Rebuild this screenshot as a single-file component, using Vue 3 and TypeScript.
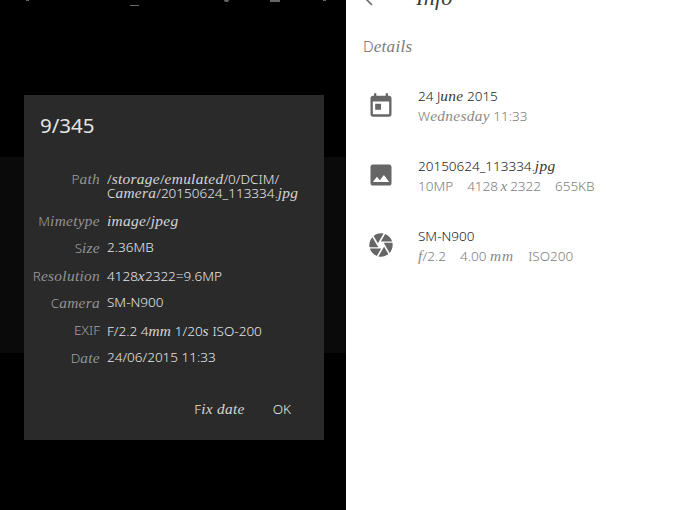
<script setup lang="ts">
interface Part { t: string; c?: boolean }
const p = (s: string): Part[] =>
  s.split(/([a-z]+)/).filter(Boolean).map((t) => ({ t, c: /^[a-z]/.test(t) }))
const rows = [
  { k: 'Path', v: ['/storage/emulated/0/DCIM/', 'Camera/20150624_113334.jpg'] },
  { k: 'Mimetype', v: ['image/jpeg'] },
  { k: 'Size', v: ['2.36MB'] },
  { k: 'Resolution', v: ['4128x2322=9.6MP'] },
  { k: 'Camera', v: ['SM-N900'] },
  { k: 'EXIF', v: ['F/2.2 4mm 1/20s ISO-200'] },
  { k: 'Date', v: ['24/06/2015 11:33'] },
]
</script>

<template>
  <div class="root">
    <section class="left">
      <div class="strip">
        <i class="mark m1"></i>
        <i class="mark m2"></i>
        <i class="mark m3"></i>
        <i class="mark m4"></i>
        <i class="mark m5"></i>
      </div>
      <div class="band"></div>
      <div class="dialog">
        <h2 class="title">9/345</h2>
        <div class="table">
          <div v-for="r in rows" :key="r.k" class="row">
            <div class="key"><span v-for="(x, i) in p(r.k)" :key="i" :class="{ c: x.c }">{{ x.t }}</span></div>
            <div class="val">
              <div v-for="(l, j) in r.v" :key="j" class="line"><span v-for="(x, i) in p(l)" :key="i" :class="{ c: x.c }">{{ x.t }}</span></div>
            </div>
          </div>
        </div>
        <div class="actions">
          <span>F<span class="c">ix date</span></span>
          <span>OK</span>
        </div>
      </div>
    </section>
    <section class="right">
      <div class="bar">
        <svg class="back" width="12" height="8" viewBox="0 0 12 8"><path d="M8 -4 2.500 1.500 8 7" transform="translate(0 -2)" fill="none" stroke="#666" stroke-width="1.6"/></svg>
        <span class="info c">Info</span>
      </div>
      <div class="heading"><span>D</span><span class="c">etails</span></div>
      <div class="item">
        <svg class="icon" viewBox="0 0 24 24"><path fill="#666" d="M19 4h-1V2h-2v2H8V2H6v2H5C3.900 4 3 4.900 3 6v14c0 1.100.9 2 2 2h14c1.100 0 2-.9 2-2V6c0-1.100-.9-2-2-2zm0 16H5V9h14v11zM7 11h5v5H7z"/></svg>
        <div class="text">
          <div class="main">24 J<span class="c">une</span> 2015</div>
          <div class="sub">W<span class="c">ednesday</span> 11:33</div>
        </div>
      </div>
      <div class="item">
        <svg class="icon" viewBox="0 0 24 24"><path fill="#666" d="M21 19V5c0-1.100-.9-2-2-2H5c-1.100 0-2 .9-2 2v14c0 1.100.9 2 2 2h14c1.100 0 2-.9 2-2zM8.500 13.500l2.500 3.010L14.500 12l4.500 6H5l3.500-4.500z"/></svg>
        <div class="text">
          <div class="main">20150624_113334.<span class="c">jpg</span></div>
          <div class="sub spaced"><span>10MP</span><span class="tight">4128 <span class="c">x</span> 2322</span><span>655KB</span></div>
        </div>
      </div>
      <div class="item">
        <svg class="icon" viewBox="0 0 24 24"><path fill="#666" d="M9.400 10.500l4.770-8.260C13.470 2.090 12.750 2 12 2c-2.400 0-4.600.85-6.320 2.260l3.660 6.340.06-.1zM21.540 9c-.92-2.920-3.150-5.260-6-6.340L11.880 9h9.660zm.26 1h-7.490l.29.500 4.760 8.250C21 16.970 22 14.610 22 12c0-.69-.07-1.350-.2-2zM8.540 12l-3.900-6.750C3.010 7.030 2 9.390 2 12c0 .69.07 1.350.2 2h7.490l-1.150-2zm-6.080 3c.92 2.920 3.150 5.260 6 6.340L12.120 15H2.460zm11.270 0l-3.900 6.760c.7.150 1.420.24 2.170.24 2.400 0 4.600-.85 6.320-2.260l-3.660-6.340-.93 1.600z"/></svg>
        <div class="text">
          <div class="main">SM-N900</div>
          <div class="sub spaced"><span><span class="c">f</span>/2.2</span><span>4.00 <span class="c wide">mm</span></span><span>ISO200</span></div>
        </div>
      </div>
    </section>
  </div>
</template>

<style scoped>
.root { width: 693px; height: 510px; display: flex; overflow: hidden; font-family: "Noto Sans", sans-serif; font-weight: 300; }
.c { font-family: "Liberation Serif", serif; font-style: italic; font-size: 1.14em; letter-spacing: 0.3px; line-height: 1; opacity: 0.9; }
.wide { letter-spacing: 1px; }
.tight { word-spacing: -1px; }
.left { position: relative; width: 346px; height: 510px; background: #000; flex: none; padding: 95px 0 0 24px; box-sizing: border-box; }
.strip { position: absolute; inset: 0 0 auto 0; height: 6px; }
.mark { position: absolute; top: 0; height: 2px; background: #666; }
.m1 { left: 26px; width: 3px; height: 1px; }
.m2 { left: 130px; width: 9px; top: 5px; height: 1px; }
.m3 { left: 224px; width: 5px; height: 2px; border-radius: 0 0 3px 3px; }
.m4 { left: 270px; width: 10px; height: 2px; }
.m5 { left: 323px; width: 3px; height: 1px; }
.band { position: absolute; left: 0; right: 0; top: 157px; height: 196px; background: #0a0a0a; }
.dialog { position: relative; width: 300px; height: 345px; background: #2a2a2a; color: #e6e6e6; box-sizing: border-box; padding: 19px 16px 0 16px; }
.title { margin: 0; font-size: 20.500px; line-height: 22px; font-weight: 400; color: #e4e4e4; }
.table { margin-top: 35px; display: flex; flex-direction: column; gap: 13.500px; font-size: 13.500px; }
.row { display: flex; gap: 7px; line-height: 14px; }
.key { width: 60px; height: 14px; text-align: right; color: #a0a0a0; white-space: nowrap; display: flex; justify-content: flex-end; align-items: baseline; }
.val { color: #e6e6e6; white-space: nowrap; }
.line { height: 14px; }
.actions { position: absolute; right: 33px; bottom: 22px; display: flex; gap: 28px; font-size: 13.500px; color: #e6e6e6; }
.right { flex: 1; background: #fff; padding-left: 17px; position: relative; }
.bar { height: 10px; position: relative; }
.back { position: absolute; left: 1px; top: 0; }
.info { position: absolute; left: 53px; top: -15px; font-size: 22px; color: #222; line-height: 26px; }
.heading { margin-top: 26px; font-size: 15px; line-height: 20px; color: #6e6e6e; }
.item { display: flex; align-items: center; gap: 23px; height: 39px; margin-top: 31px; }
.heading + .item { margin-top: 29px; }
.icon { width: 28px; height: 28px; margin-left: 4px; flex: none; }
.text { margin-top: 3px; }
.main { font-size: 13.500px; line-height: 19px; height: 19px; color: #222; white-space: nowrap; }
.sub { font-size: 13.500px; line-height: 20px; height: 20px; color: #7c7c7c; white-space: nowrap; }
.spaced { display: flex; gap: 14px; }
</style>
